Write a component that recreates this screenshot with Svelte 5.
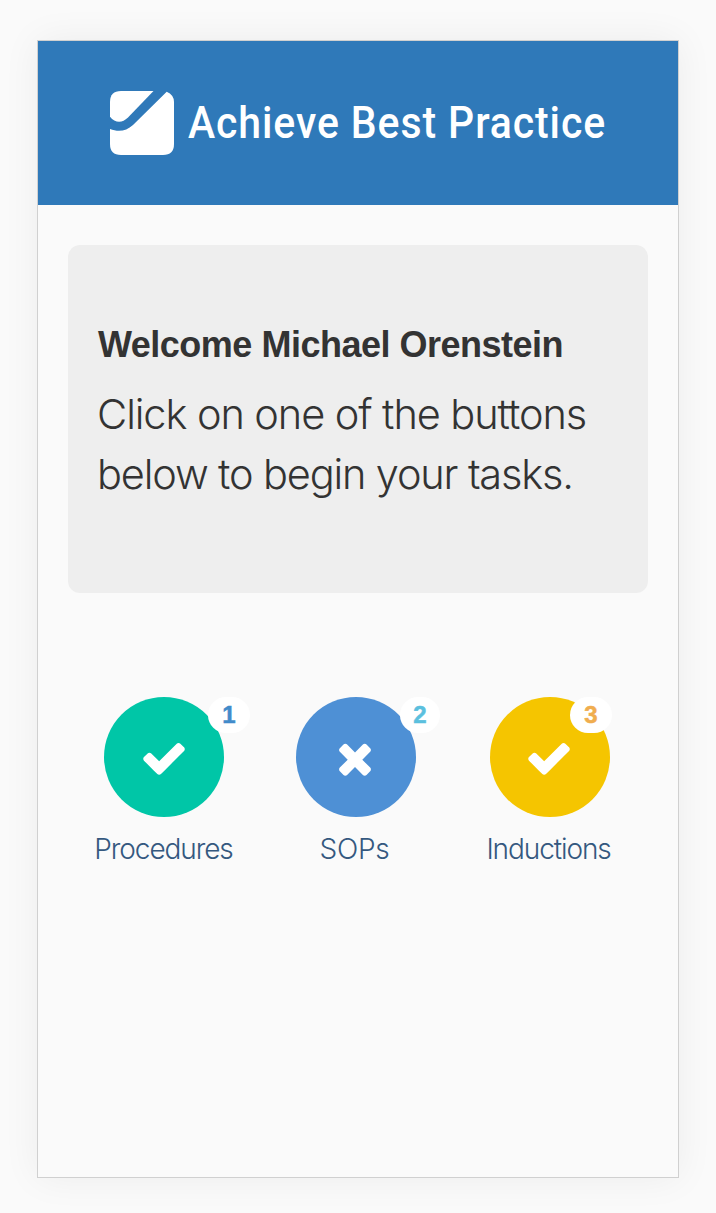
<script>
  const check = 'M1671 566q0 40-28 68l-724 724-136 136q-28 28-68 28t-68-28l-136-136-362-362q-28-28-28-68t28-68l136-136q28-28 68-28t68 28l294 295 656-657q28-28 68-28t68 28l136 136q28 28 28 68z';
  const times = 'M1490 1322q0 40-28 68l-136 136q-28 28-68 28t-68-28l-294-294-294 294q-28 28-68 28t-68-28l-136-136q-28-28-28-68t28-68l294-294-294-294q-28-28-28-68t28-68l136-136q28-28 68-28t68 28l294 294 294-294q28-28 68-28t68 28l136 136q28 28 28 68t-28 68l-294 294 294 294q28 28 28 68z';
  const tasks = [
    { name: 'procedures', label: 'Procedures', count: 1, icon: check },
    { name: 'sops', label: 'SOPs', count: 2, icon: times },
    { name: 'inductions', label: 'Inductions', count: 3, icon: check }
  ];
</script>

<main class="screen">
  <header>
    <svg class="logo" viewBox="0 0 64 64" aria-hidden="true">
      <path d="M11 0H43.5L18 26.500C12 32.500 5 32 0 25.700V11Q0 0 11 0Z" />
      <path d="M56.700 .8Q64 4 64 11V53Q64 64 53 64H11Q0 64 0 53V38C8 41 16 40.500 23 34Z" />
    </svg>
    <h1>Achieve Best Practice</h1>
  </header>
  <section class="welcome">
    <h2>Welcome Michael Orenstein</h2>
    <p><span class="l1">Click on one of the buttons</span><br /><span class="l2">below to begin your tasks.</span></p>
  </section>
  <nav>
    {#each tasks as task}
      <a class="task {task.name}" href="#{task.name}">
        <span class="circle">
          <svg viewBox="0 0 1792 1792" aria-hidden="true"><path d={task.icon} /></svg>
          <span class="badge">{task.count}</span>
        </span>
        <span class="label">{task.label}</span>
      </a>
    {/each}
  </nav>
</main>

<style>
  :global(body) { background: #fafafa; }
  .screen {
    box-sizing: border-box;
    width: 642px;
    height: 1138px;
    margin: 40px 0 0 37px;
    border: 1px solid #d0d0d0;
    background: #fafafa;
    box-shadow: 0 0 36px rgba(0, 0, 0, 0.06);
    color: #333;
    font-family: Inter, "Liberation Sans", sans-serif;
  }
  :global(#app) { display: flow-root; height: 1213px; overflow: hidden; }
  header {
    display: flex;
    align-items: center;
    height: 164px;
    padding-left: 72px;
    background: #2f79b9;
    color: #fff;
  }
  .logo { width: 64px; height: 64px; fill: #fff; flex: none; }
  h1 {
    margin: 2px 0 0 14px;
    font: 500 43.5px/60px Roboto, sans-serif;
    letter-spacing: 1px;
    white-space: nowrap;
    transform: scaleX(0.94);
    transform-origin: left;
  }
  .welcome {
    box-sizing: border-box;
    height: 348px;
    margin: 40px 30px 0;
    padding: 80px 30px 0;
    border-radius: 12px;
    background: #eee;
    white-space: nowrap;
  }
  h2 {
    margin: 0;
    font: bold 36px/40px "Liberation Sans", sans-serif;
    letter-spacing: -0.5px;
  }
  p {
    margin: 19px 0 0 -1px;
    font-size: 41.500px;
    font-weight: 300;
    line-height: 60px;
    letter-spacing: -1.080px;
  }
  .l2 { letter-spacing: -1.160px; }
  nav {
    display: grid;
    grid-template-columns: 192px 192px 196px;
    margin: 104px 30px 0;
  }
  .task {
    display: flex;
    flex-direction: column;
    align-items: center;
    text-decoration: none;
    color: #34587f;
  }
  .circle {
    position: relative;
    display: flex;
    justify-content: center;
    width: 120px;
    height: 120px;
    border-radius: 50%;
  }
  .circle svg { width: 48px; height: 48px; margin-top: 37px; fill: #fff; }
  .sops .circle svg, .inductions .circle svg { margin-right: 2px; }
  .procedures .circle { background: #00c6a7; }
  .sops .circle { background: #4e90d5; }
  .inductions .circle { background: #f5c500; }
  .badge {
    position: absolute;
    top: 0;
    left: 104px;
    width: 42px;
    height: 36px;
    border-radius: 20px;
    background: #fff;
    color: #428bca;
    font: bold 24px/36px "Liberation Sans", sans-serif;
    text-align: center;
    -webkit-text-stroke: 0.5px currentColor;
  }
  .sops .badge { width: 40px; color: #5bc0de; }
  .inductions .badge { left: 80px; color: #f0ad4e; }
  .label {
    margin-top: 12px;
    padding-right: 1px;
    font-size: 28px;
    font-weight: 300;
    line-height: 40px;
    letter-spacing: -1.100px;
  }
  .sops .label { padding-right: 3px; letter-spacing: -0.300px; }
  .inductions .label { padding-right: 3px; }
</style>
